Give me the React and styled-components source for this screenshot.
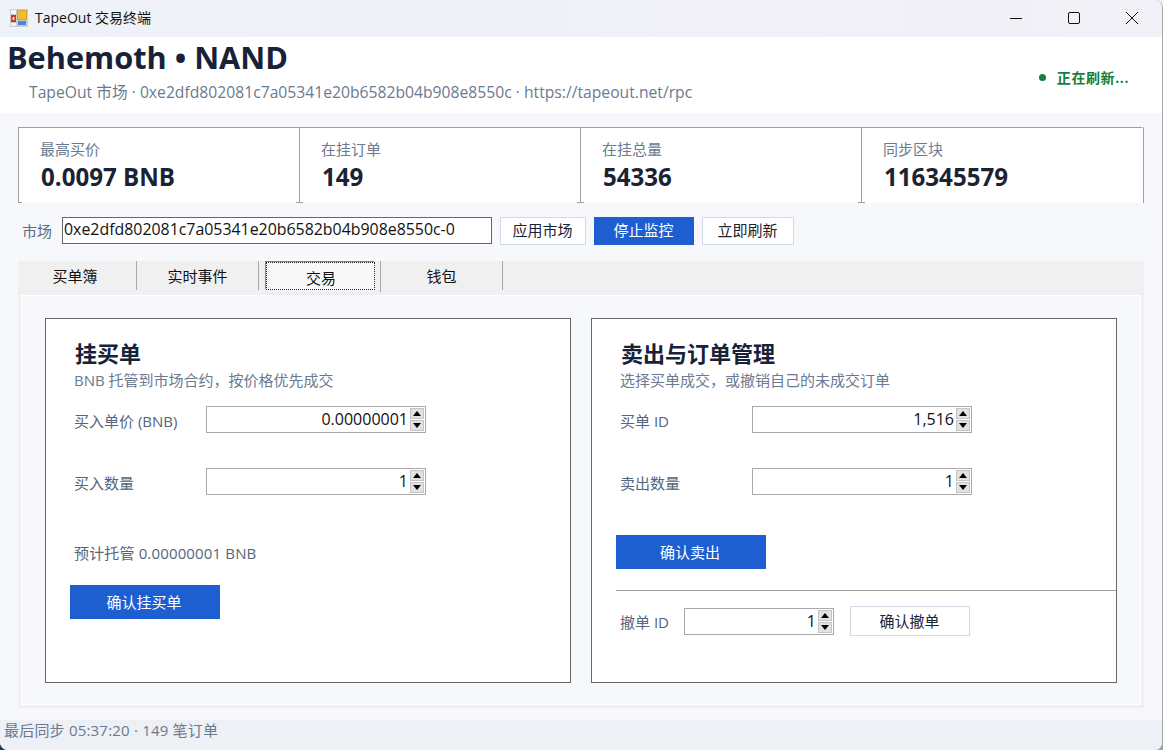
import React from "react";
import styled, { createGlobalStyle } from "styled-components";

const UI_FONT = `"Open Sans", "Noto Sans CJK SC", sans-serif`;

const Global = createGlobalStyle`
  html, body {
    margin: 0;
    padding: 0;
    background: linear-gradient(#f2f2f2 50%, transparent 50%),
      linear-gradient(90deg, #16404f 50%, #a0a0a0 50%);
  }
  * {
    box-sizing: border-box;
  }
`;

const AppIcon = () => (
  <svg width="18" height="18" viewBox="0 0 18 18">
    <rect x="0" y="0" width="18" height="18" fill="#cdcdcd" />
    <rect x="1" y="1" width="5" height="4" fill="#f6f6f6" />
    <rect x="1" y="6" width="5" height="7" fill="#c8352b" />
    <rect x="2.5" y="8" width="2" height="3" fill="#f2d5cf" />
    <rect x="7.5" y="1.5" width="9" height="9" fill="#f2bd2c" stroke="#d99a16" strokeWidth="0.8" />
    <rect x="8" y="12" width="8" height="4" fill="#4a86e0" />
    <rect x="1" y="14" width="5" height="3" fill="#f2f2f2" />
  </svg>
);

const StatItem = ({ label, value }) => (
  <Stat>
    <StatLabel>{label}</StatLabel>
    <StatValue>{value}</StatValue>
  </Stat>
);

const Spin = ({ value, width }) => (
  <SpinBox $width={width}>
    <SpinValue>{value}</SpinValue>
    <SpinButtons>
      <SpinButton>
        <svg width="8" height="5" viewBox="0 0 8 5"><path d="M4 0L8 5H0Z" fill="#000" /></svg>
      </SpinButton>
      <SpinButton>
        <svg width="8" height="5" viewBox="0 0 8 5"><path d="M0 0H8L4 5Z" fill="#000" /></svg>
      </SpinButton>
    </SpinButtons>
  </SpinBox>
);

export default function App() {
  return (
    <>
      <Global />
      <Win>
        <TitleBar>
          <AppIcon />
          <WinTitle>TapeOut 交易终端</WinTitle>
          <WinControls>
            <WinControl>
              <svg width="12" height="12" viewBox="0 0 12 12"><path d="M0 6.5H12" stroke="#111" strokeWidth="1" /></svg>
            </WinControl>
            <WinControl>
              <svg width="12" height="12" viewBox="0 0 12 12"><rect x="0.5" y="0.5" width="11" height="11" rx="1.5" fill="none" stroke="#111" strokeWidth="1" /></svg>
            </WinControl>
            <WinControl>
              <svg width="12" height="12" viewBox="0 0 12 12"><path d="M0 0L12 12M12 0L0 12" stroke="#111" strokeWidth="1" /></svg>
            </WinControl>
          </WinControls>
        </TitleBar>

        <Header>
          <HeaderText>
            <Title>Behemoth • NAND</Title>
            <Subtitle>TapeOut 市场 · 0xe2dfd802081c7a05341e20b6582b04b908e8550c · https://tapeout.net/rpc</Subtitle>
          </HeaderText>
          <Status><StatusDot />正在刷新...</Status>
        </Header>

        <Main>
          <Stats>
            <StatItem label="最高买价" value="0.0097 BNB" />
            <StatItem label="在挂订单" value="149" />
            <StatItem label="在挂总量" value="54336" />
            <StatItem label="同步区块" value="116345579" />
          </Stats>

          <MarketRow>
            <MarketLabel>市场</MarketLabel>
            <MarketInput>0xe2dfd802081c7a05341e20b6582b04b908e8550c-0</MarketInput>
            <Button $width={86}>应用市场</Button>
            <Button $width={100} $primary>停止监控</Button>
            <Button $width={92}>立即刷新</Button>
          </MarketRow>

          <TabStrip>
            <Tab $width={119}>买单簿</Tab>
            <Tab $width={122}>实时事件</Tab>
            <ActiveTab><ActiveTabLabel>交易</ActiveTabLabel></ActiveTab>
            <Tab $width={122}>钱包</Tab>
          </TabStrip>

          <TabPanel>
            <Card>
              <CardTitle>挂买单</CardTitle>
              <CardHint>BNB 托管到市场合约{"\uFF0C"}按价格优先成交</CardHint>
              <FieldRow>
                <FieldLabel>买入单价 (BNB)</FieldLabel>
                <Spin value="0.00000001" width={220} />
              </FieldRow>
              <FieldRow $gap={35}>
                <FieldLabel>买入数量</FieldLabel>
                <Spin value="1" width={220} />
              </FieldRow>
              <Estimate>预计托管 0.00000001 BNB</Estimate>
              <WideButton $top={22}>确认挂买单</WideButton>
            </Card>

            <Card>
              <CardTitle>卖出与订单管理</CardTitle>
              <CardHint>选择买单成交{"\uFF0C"}或撤销自己的未成交订单</CardHint>
              <FieldRow>
                <FieldLabel>买单 ID</FieldLabel>
                <Spin value="1,516" width={220} />
              </FieldRow>
              <FieldRow $gap={35}>
                <FieldLabel>卖出数量</FieldLabel>
                <Spin value="1" width={220} />
              </FieldRow>
              <WideButton $top={40}>确认卖出</WideButton>
              <Divider />
              <CancelRow>
                <CancelLabel>撤单 ID</CancelLabel>
                <Spin value="1" width={150} />
                <Button $width={120} $height={30}>确认撤单</Button>
              </CancelRow>
            </Card>
          </TabPanel>
        </Main>

        <Footer>最后同步 05:37:20 · 149 笔订单</Footer>
      </Win>
    </>
  );
}

const Win = styled.div`
  width: 1163px;
  height: 750px;
  display: flex;
  flex-direction: column;
  overflow: hidden;
  border-radius: 8px;
  border-right: 1px solid #a8a8a8;
  background: #f6f8fb;
  font-family: ${UI_FONT};
  color: #1a2233;
`;

const TitleBar = styled.div`
  height: 37px;
  flex: none;
  display: flex;
  align-items: center;
  padding: 0 0 2px 10px;
  background: linear-gradient(90deg, #eef2f9, #f3f0f7);
`;

const WinTitle = styled.div`
  margin: 0 0 2px 7px;
  font-size: 14px;
  color: #111;
`;

const WinControls = styled.div`
  margin-left: auto;
  display: flex;
  padding-right: 1px;
`;

const WinControl = styled.div`
  width: 58px;
  height: 35px;
  display: flex;
  align-items: center;
  justify-content: center;
`;

const Header = styled.div`
  height: 76px;
  flex: none;
  display: flex;
  justify-content: space-between;
  background: #fff;
`;

const HeaderText = styled.div`
  padding-left: 7px;
`;

const Title = styled.h1`
  margin: 0;
  font-size: 30.7px;
  line-height: 40px;
  font-weight: 700;
  color: #172238;
`;

const Subtitle = styled.div`
  margin: 5px 0 0 22px;
  font-size: 15.7px;
  line-height: 20px;
  color: #6b7a90;
`;

const Status = styled.div`
  margin: 30px 33px 0 0;
  display: flex;
  align-items: center;
  height: 20px;
  font-size: 14px;
  letter-spacing: 0.6px;
  font-weight: 700;
  color: #15803d;
`;

const StatusDot = styled.span`
  width: 7px;
  height: 7px;
  margin-right: 11px;
  border-radius: 50%;
  background: #15803d;
`;

const Main = styled.div`
  flex: 1;
  padding: 14px 18px 12px 18px;
  display: flex;
  flex-direction: column;
`;

const Stats = styled.div`
  height: 76px;
  flex: none;
  display: grid;
  grid-template-columns: repeat(4, 281px);
  border-right: 1px solid #a0a0a0;
  background: #fff;
`;

const Stat = styled.div`
  position: relative;
  padding: 11px 0 0 21px;
  border-top: 1px solid #a0a0a0;
  border-left: 1px solid #a0a0a0;

  &::after {
    content: "";
    position: absolute;
    left: -4px;
    bottom: 0;
    width: 7px;
    height: 1px;
    background: #a0a0a0;
  }
  &:first-child::after {
    left: -1px;
    width: 4px;
  }
`;

const StatLabel = styled.div`
  font-size: 15px;
  line-height: 20px;
  color: #6b7a90;
`;

const StatValue = styled.div`
  margin: 3px 0 0 1px;
  font-size: 24.1px;
  line-height: 30px;
  font-weight: 700;
`;

const MarketRow = styled.div`
  margin-top: 13px;
  height: 29px;
  flex: none;
  display: flex;
  align-items: center;
  gap: 8px;
`;

const MarketLabel = styled.div`
  margin-left: 4px;
  margin-right: 2px;
  font-size: 15px;
  color: #5b6b82;
`;

const MarketInput = styled.div`
  width: 430px;
  height: 27px;
  padding-left: 1px;
  border: 1px solid #666;
  background: #fff;
  font-size: 15.9px;
  line-height: 23px;
  color: #111;
`;

const Button = styled.div`
  width: ${(p) => p.$width}px;
  height: ${(p) => p.$height || 28}px;
  padding: 0 1px 2px 0;
  display: flex;
  align-items: center;
  justify-content: center;
  border: 1px solid ${(p) => (p.$primary ? "#1d5fd1" : "#d3dae5")};
  background: ${(p) => (p.$primary ? "#1d5fd1" : "#fff")};
  color: ${(p) => (p.$primary ? "#fff" : "#1a2233")};
  font-size: 15px;
`;

const TabStrip = styled.div`
  margin-top: 16px;
  height: 34px;
  flex: none;
  display: flex;
  padding-bottom: 3px;
  background: #f0f0f0;
`;

const Tab = styled.div`
  width: ${(p) => p.$width}px;
  height: 29px;
  display: flex;
  align-items: center;
  justify-content: center;
  border-right: 1px solid #a8a8a8;
  font-size: 15px;
  color: #111;

  &:first-child {
    padding-right: 4px;
  }
`;

const ActiveTab = styled.div`
  width: 122px;
  height: 31px;
  padding: 1px 5px 0 7px;
  border-right: 1px solid #a8a8a8;
`;

const ActiveTabLabel = styled.div`
  height: 28px;
  padding: 3px 0 0 1px;
  display: flex;
  align-items: center;
  justify-content: center;
  border: 1px dotted #222;
  box-shadow: -1px -1px 0 #808080;
  background: repeating-conic-gradient(#f2f2f2 0% 25%, #fff 0% 50%) 0 0 / 2px 2px;
  font-size: 15px;
  color: #111;
`;

const TabPanel = styled.div`
  flex: 1;
  display: grid;
  grid-template-columns: 526px 526px;
  column-gap: 20px;
  padding: 23px 23px 22px 24px;
  border: solid #f0f0f0;
  border-width: 0 3px 3px 3px;
  box-shadow: inset 1px 1px 0 #fff, inset -1px -1px 0 #fff;
`;

const Card = styled.div`
  padding: 19px 0 0 24px;
  border: 1px solid #666;
  background: #fff;
`;

const CardTitle = styled.div`
  margin-left: 5px;
  font-size: 22px;
  line-height: 30px;
  font-weight: 700;
  color: #172238;
`;

const CardHint = styled.div`
  margin: 2px 0 0 4px;
  font-size: 15px;
  line-height: 20px;
  color: #6b7a90;
`;

const FieldRow = styled.div`
  margin-top: ${(p) => p.$gap || 16}px;
  display: flex;
  align-items: center;
`;

const FieldLabel = styled.div`
  width: 132px;
  margin-left: 4px;
  padding-top: 1px;
  font-size: 15px;
  color: #55657c;
`;

const SpinBox = styled.div`
  width: ${(p) => p.$width}px;
  height: 27px;
  display: flex;
  justify-content: flex-end;
  border: 1px solid #a9a9a9;
  background: #fff;
`;

const SpinValue = styled.div`
  padding-right: 1px;
  font-size: 16px;
  line-height: 24px;
  color: #111;
`;

const SpinButtons = styled.div`
  width: 16px;
  display: flex;
  flex-direction: column;
  gap: 1px;
  padding: 1px;
`;

const SpinButton = styled.div`
  flex: 1;
  display: flex;
  align-items: center;
  justify-content: center;
  background: #e2e2e2;
  border: 1px solid #c4c4c4;
`;

const Estimate = styled.div`
  margin: 48px 0 0 4px;
  font-size: 15px;
  letter-spacing: 0.15px;
  line-height: 20px;
  color: #55657c;
`;

const WideButton = styled.div`
  width: 150px;
  height: 34px;
  margin-top: ${(p) => p.$top}px;
  padding: 0 2px 2px 0;
  display: flex;
  align-items: center;
  justify-content: center;
  background: #1d5fd1;
  color: #fff;
  font-size: 15px;
`;

const Divider = styled.div`
  height: 1px;
  margin-top: 21px;
  background: #a0a0a0;
`;

const CancelRow = styled.div`
  margin-top: 15px;
  display: flex;
  align-items: center;
  gap: 16px;
`;

const CancelLabel = styled.div`
  width: 64px;
  margin-left: 4px;
  margin-right: -16px;
  padding-top: 1px;
  font-size: 15px;
  color: #55657c;
`;

const Footer = styled.div`
  height: 30px;
  flex: none;
  padding-left: 4px;
  background: #edf0f5;
  font-size: 15px;
  letter-spacing: 0.2px;
  line-height: 20px;
  color: #6b7a90;
`;
